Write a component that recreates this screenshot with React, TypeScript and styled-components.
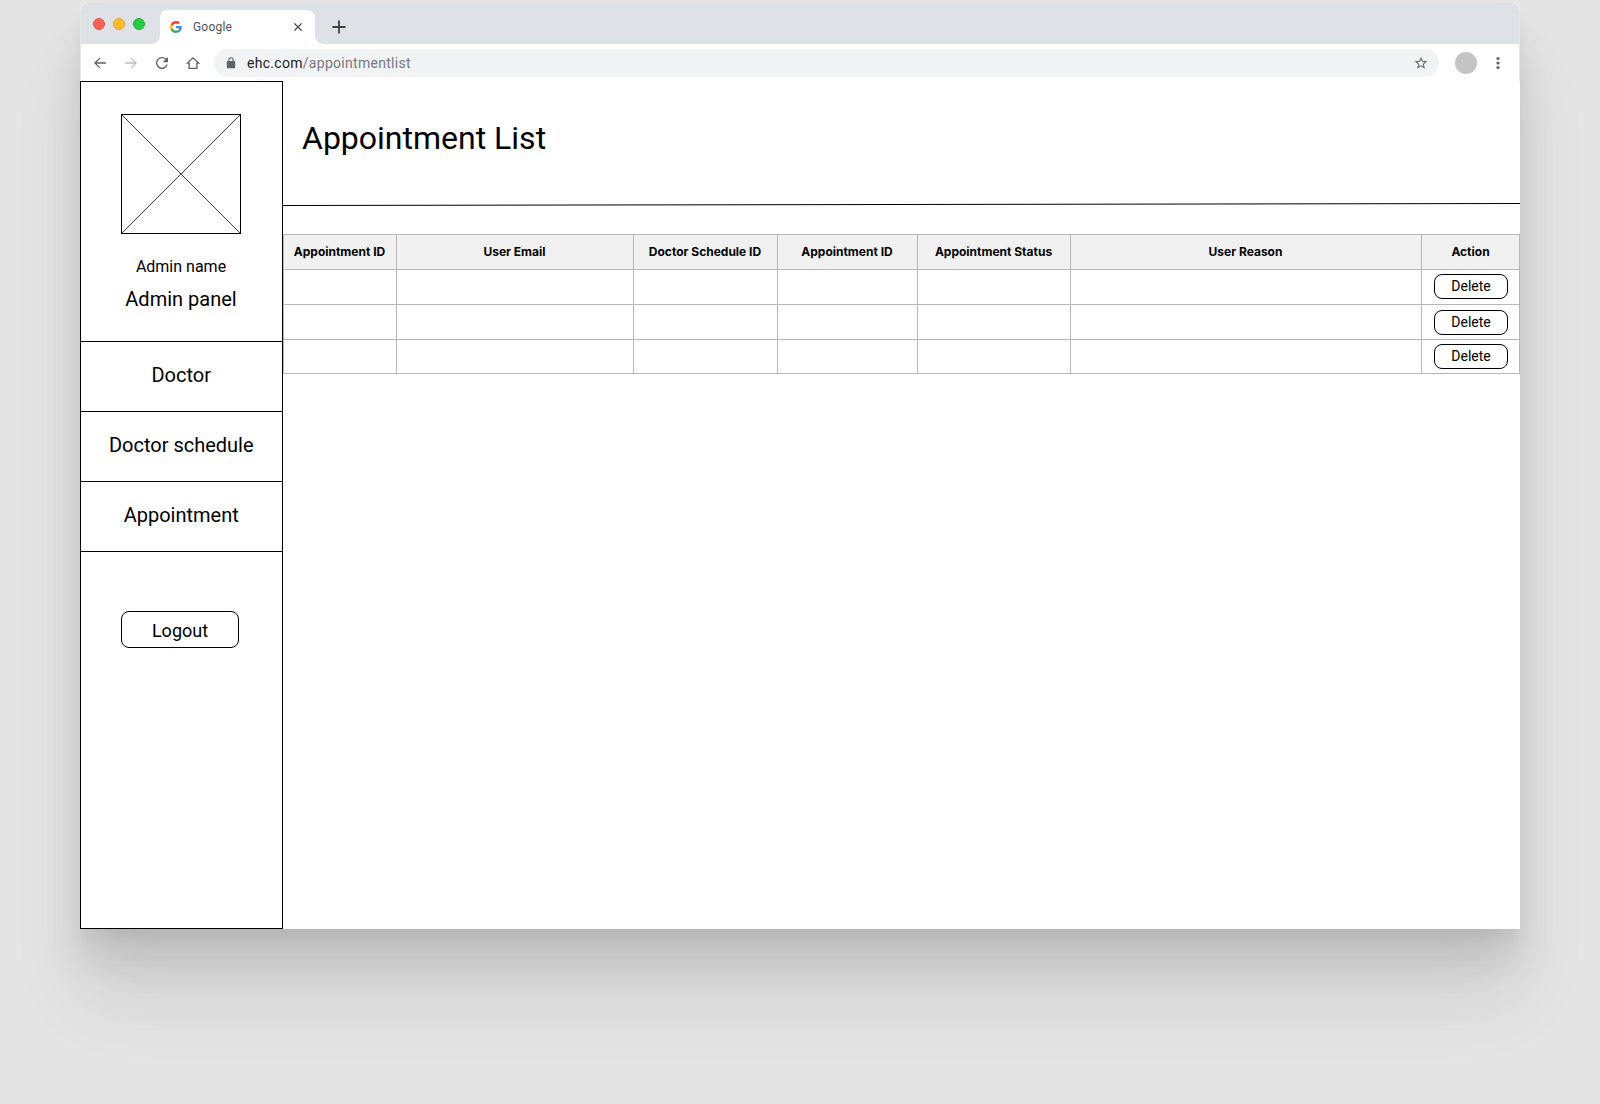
import React from "react";
import styled, { createGlobalStyle } from "styled-components";

const GlobalStyle = createGlobalStyle`
  *, *::before, *::after { box-sizing: border-box; }
  body { margin: 0; background: #e4e4e4; font-family: Roboto, "Liberation Sans", sans-serif; color: #000; }
  button { font: inherit; color: inherit; margin: 0; cursor: pointer; }
`;

const Page = styled.div`
  height: 1104px;
  padding: 3px 80px 0;
  background: #e4e4e4;
  overflow: hidden;
`;

const BrowserWindow = styled.div`
  width: 1440px;
  height: 926px;
  display: flex;
  flex-direction: column;
  border-radius: 8px 8px 0 0;
  background: #fff;
  box-shadow:
    0 70px 72px rgba(0, 0, 0, 0.085),
    0 32px 40px rgba(0, 0, 0, 0.09),
    0 12px 14px rgba(0, 0, 0, 0.035);
`;

const Chrome = styled.header`
  height: 78px;
  flex: none;
  border: solid #e4e6e8;
  border-width: 0 1px;
  border-radius: 8px 8px 0 0;
  overflow: hidden;
`;

const TabStrip = styled.div`
  height: 41px;
  padding: 7px 0 0 12px;
  display: flex;
  align-items: flex-start;
  background: #dee1e6;
`;

const TrafficLights = styled.div`
  display: flex;
  gap: 8px;
  padding-top: 7.5px;
  margin-right: 15px;
`;

const Light = styled.span<{ $color: string; $edge: string }>`
  width: 12px;
  height: 12px;
  border-radius: 50%;
  border: 0.5px solid ${(p) => p.$edge};
  background: ${(p) => p.$color};
`;

const Tab = styled.div`
  position: relative;
  width: 155px;
  height: 34px;
  display: flex;
  align-items: center;
  padding: 0 12px 0 10px;
  border-radius: 8px 8px 0 0;
  background: #fff;
  &::before, &::after {
    content: "";
    position: absolute;
    bottom: 0;
    width: 8px;
    height: 8px;
  }
  &::before { left: -8px; background: radial-gradient(circle at 0 0, transparent 7.5px, #fff 8px); }
  &::after { right: -8px; background: radial-gradient(circle at 100% 0, transparent 7.5px, #fff 8px); }
`;

const TabTitle = styled.span`
  flex: 1;
  margin-left: 11px;
  font-size: 12px;
  line-height: 16px;
  letter-spacing: 0.2px;
  color: #505357;
`;

const NewTab = styled.div`
  display: flex;
  padding: 10px 0 0 17px;
`;

const Toolbar = styled.div`
  height: 37px;
  display: flex;
  align-items: center;
  padding: 1px 19px 0 11px;
  background: #fff;
`;

const Nav = styled.nav`
  display: flex;
  gap: 15px;
  margin-right: 13px;
`;

const AddressBar = styled.div`
  flex: 1;
  height: 28px;
  display: flex;
  align-items: center;
  padding: 0 11px 0 12px;
  border-radius: 14px;
  background: #f1f3f4;
`;

const Url = styled.span`
  flex: 1;
  margin-left: 11px;
  font-size: 14px;
  line-height: 20px;
  letter-spacing: 0.29px;
  color: #202124;
`;

const UrlPath = styled.span`
  color: #75787c;
`;

const Avatar = styled.span`
  width: 22px;
  height: 22px;
  margin: 0 19px 0 16px;
  border-radius: 50%;
  background: #c4c4c4;
`;

const Content = styled.div`
  flex: 1;
  display: flex;
`;

const Sidebar = styled.aside`
  width: 203px;
  display: flex;
  flex-direction: column;
  border: 1px solid #000;
`;

const Profile = styled.div`
  height: 260px;
  display: flex;
  flex-direction: column;
  align-items: center;
  padding: 32px 1px 0 0;
  border-bottom: 1px solid #000;
`;

const ImagePlaceholder = styled.svg`
  display: block;
  flex: none;
`;

const AdminName = styled.div`
  margin-top: 23px;
  font-size: 16px;
  line-height: 19px;
`;

const AdminPanel = styled.div`
  margin-top: 12px;
  font-size: 20px;
  line-height: 23px;
`;

const MenuItem = styled.a`
  height: 70px;
  display: flex;
  align-items: center;
  justify-content: center;
  padding: 0 0.5px 2px 0;
  border-bottom: 1px solid #000;
  font-size: 20px;
  line-height: 23px;
`;

const LogoutButton = styled.button`
  width: 118px;
  height: 37px;
  margin: 59px 0 0 40px;
  padding: 2px 0 0;
  border: 1px solid #000;
  border-radius: 8px;
  background: #fff;
  font-size: 18px;
  line-height: 21px;
`;

const Main = styled.main`
  flex: 1;
  min-width: 0;
`;

const PageTitle = styled.h1`
  height: 121px;
  margin: 0;
  padding: 38px 0 0 19px;
  font-size: 32px;
  line-height: 38px;
  font-weight: 400;
`;

const Divider = styled.svg`
  display: block;
  height: 5px;
  width: 1237px;
`;

const Table = styled.table`
  width: 1237px;
  margin-top: 27px;
  table-layout: fixed;
  border-collapse: separate;
  border-spacing: 0;
  border: solid #b7b7b7;
  border-width: 1px 0 0 1px;
`;

const Row = styled.tr<{ $height: number }>`
  height: ${(p) => p.$height}px;
`;

const HeadCell = styled.th`
  padding: 0 1px 1px 0;
  border: solid #b7b7b7;
  border-width: 0 1px 1px 0;
  background: #f1f1f1;
  font-family: Inter, "Liberation Sans", sans-serif;
  font-size: 12px;
  line-height: 15px;
  font-weight: 700;
  white-space: nowrap;

  &:last-child {
    padding-right: 0;
  }
`;

const Cell = styled.td<{ $top?: number }>`
  padding: ${(p) => p.$top ?? 0}px 0 0 12px;
  border: solid #b7b7b7;
  border-width: 0 1px 1px 0;
  vertical-align: top;
`;

const DeleteButton = styled.button`
  display: block;
  width: 74px;
  height: 25px;
  padding: 0 0 1px;
  border: 1px solid #000;
  border-radius: 8px;
  background: #fff;
  font-size: 14px;
  line-height: 16px;
`;

const navIcon = { width: 16, height: 16, viewBox: "0 0 24 24", fill: "#5f6368" };

const columns = [
  { label: "Appointment ID", width: 113 },
  { label: "User Email", width: 237 },
  { label: "Doctor Schedule ID", width: 144 },
  { label: "Appointment ID", width: 140 },
  { label: "Appointment Status", width: 153 },
  { label: "User Reason", width: 351 },
  { label: "Action", width: 98 },
];

const rows = [
  { height: 35, top: 4 },
  { height: 35, top: 5 },
  { height: 34, top: 4 },
];

export default function App() {
  return (
    <Page>
      <GlobalStyle />
      <BrowserWindow>
        <Chrome>
          <TabStrip>
            <TrafficLights>
              <Light $color="#ff5f57" $edge="#e2544c" />
              <Light $color="#ffbd2e" $edge="#e0a32a" />
              <Light $color="#28ca42" $edge="#25b13b" />
            </TrafficLights>
            <Tab>
              <svg width="12" height="12" viewBox="0 0 48 48">
                <path fill="#ea4335" d="M24 9.5c3.54 0 6.71 1.22 9.21 3.6l6.85-6.85C35.9 2.38 30.47 0 24 0 14.62 0 6.51 5.38 2.56 13.22l7.98 6.19C12.43 13.72 17.74 9.5 24 9.5z" />
                <path fill="#4285f4" d="M46.98 24.55c0-1.57-.15-3.09-.38-4.55H24v9.02h12.94c-.58 2.96-2.26 5.48-4.78 7.18l7.73 6c4.51-4.18 7.09-10.36 7.09-17.65z" />
                <path fill="#fbbc05" d="M10.53 28.59a14.5 14.5 0 0 1 0-9.18l-7.98-6.19a24 24 0 0 0 0 21.56l7.98-6.19z" />
                <path fill="#34a853" d="M24 48c6.48 0 11.93-2.13 15.89-5.81l-7.73-6c-2.15 1.45-4.92 2.3-8.16 2.3-6.26 0-11.57-4.22-13.47-9.91l-7.98 6.19C6.51 42.62 14.62 48 24 48z" />
              </svg>
              <TabTitle>Google</TabTitle>
              <svg width="10" height="10" viewBox="0 0 10 10" stroke="#3c4043" strokeWidth="1.3">
                <path d="M1.4 1.4l7.2 7.2M8.6 1.4L1.4 8.6" />
              </svg>
            </Tab>
            <NewTab>
              <svg width="14" height="14" viewBox="0 0 14 14" stroke="#3c4043" strokeWidth="1.8">
                <path d="M7 0.4v13.2M0.4 7h13.2" />
              </svg>
            </NewTab>
          </TabStrip>
          <Toolbar>
            <Nav>
              <svg {...navIcon}>
                <path d="M21 11H6.83l5.59-5.59L11 4l-8 8 8 8 1.41-1.41L6.83 13H21v-2z" />
              </svg>
              <svg {...navIcon} fill="#babcbe">
                <path d="M3 13h14.17l-5.59 5.59L13 20l8-8-8-8-1.41 1.41L17.17 11H3v2z" />
              </svg>
              <svg {...navIcon}>
                <path d="M18.4 5.6A9 9 0 1 0 20.7 14.3h-2.1A7 7 0 1 1 17 7.05L13 11h8V3l-2.6 2.6z" />
              </svg>
              <svg {...navIcon} fill="none" stroke="#5f6368" strokeWidth="2">
                <path d="M3.6 12.2L12 4.3l8.4 7.9H17.8V20H6.2v-7.8H3.6z" />
              </svg>
            </Nav>
            <AddressBar>
              <svg width="10" height="12" viewBox="0 0 10 12">
                <rect x="0.8" y="4" width="8.4" height="7.2" rx="0.9" fill="#5f6368" />
                <path d="M2.9 4.5V2.9a2.1 2.1 0 0 1 4.2 0v1.6" fill="none" stroke="#5f6368" strokeWidth="1.1" />
              </svg>
              <Url>
                ehc.com<UrlPath>/appointmentlist</UrlPath>
              </Url>
              <svg width="14" height="14" viewBox="1 1 22 22" fill="#5f6368">
                <path d="M22 9.24l-7.19-.62L12 2 9.19 8.63 2 9.24l5.46 4.73L5.82 21 12 17.27 18.18 21l-1.63-7.03L22 9.24zM12 15.4l-3.76 2.27 1-4.28-3.32-2.88 4.38-.38L12 6.1l1.71 4.04 4.38.38-3.32 2.88 1 4.28L12 15.4z" />
              </svg>
            </AddressBar>
            <Avatar />
            <svg width="4" height="14" viewBox="0 0 4 14" fill="#5f6368">
              <circle cx="2" cy="2.5" r="1.6" />
              <circle cx="2" cy="7" r="1.6" />
              <circle cx="2" cy="11.5" r="1.6" />
            </svg>
          </Toolbar>
        </Chrome>
        <Content>
          <Sidebar>
            <Profile>
              <ImagePlaceholder width="120" height="120" viewBox="0 0 120 120" fill="none" stroke="#000">
                <rect x="0.5" y="0.5" width="119" height="119" />
                <path d="M0.5 0.5l119 119M119.5 0.5l-119 119" strokeWidth="0.75" />
              </ImagePlaceholder>
              <AdminName>Admin name</AdminName>
              <AdminPanel>Admin panel</AdminPanel>
            </Profile>
            <MenuItem>Doctor</MenuItem>
            <MenuItem>Doctor schedule</MenuItem>
            <MenuItem>Appointment</MenuItem>
            <LogoutButton>Logout</LogoutButton>
          </Sidebar>
          <Main>
            <PageTitle>Appointment List</PageTitle>
            <Divider viewBox="0 0 1237 5">
              <path d="M0 3.5L1237 1.5" stroke="#000" />
            </Divider>
            <Table>
              <colgroup>
                {columns.map((c, i) => (
                  <col key={i} width={c.width} />
                ))}
              </colgroup>
              <thead>
                <Row $height={35}>
                  {columns.map((c, i) => (
                    <HeadCell key={i}>{c.label}</HeadCell>
                  ))}
                </Row>
              </thead>
              <tbody>
                {rows.map((r, i) => (
                  <Row key={i} $height={r.height}>
                    {columns.slice(1).map((_, j) => (
                      <Cell key={j} />
                    ))}
                    <Cell $top={r.top}>
                      <DeleteButton>Delete</DeleteButton>
                    </Cell>
                  </Row>
                ))}
              </tbody>
            </Table>
          </Main>
        </Content>
      </BrowserWindow>
    </Page>
  );
}
